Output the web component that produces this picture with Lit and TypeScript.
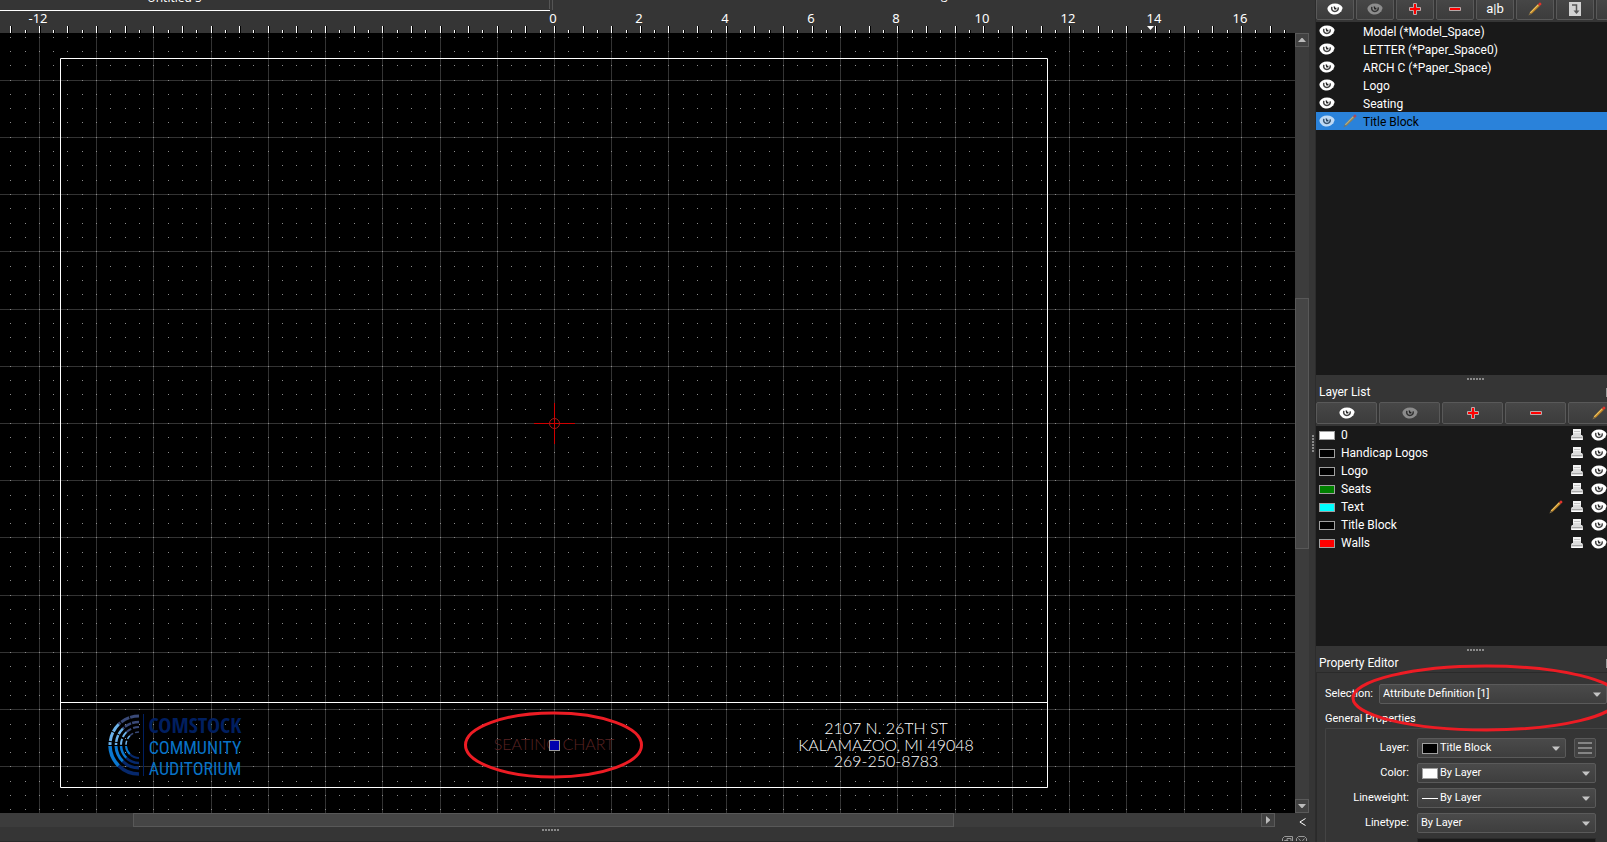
import { LitElement, html, svg, css } from "lit";
import { customElement } from "lit/decorators.js";
import { classMap } from "lit/directives/class-map.js";

const ORIGIN_X = 554;
const ORIGIN_Y = 423;
const STEP = 14.31;

const gridX = (k: number) => Math.round(ORIGIN_X + k * STEP);
const gridY = (k: number) => Math.round(ORIGIN_Y + k * STEP);
const range = (from: number, to: number) =>
  Array.from({ length: to - from + 1 }, (_, i) => from + i);

const eye = () => html`<svg class="icon" width="16" height="12" viewBox="0 0 16 12" aria-hidden="true">
  <path fill="currentColor" d="M.4 5C1.400 2.300 4.200.4 8 .4c3.900 0 6.500 1.700 7.600 4.400-.1 1.200-.5 1.900-1 2.500.2 1-.4 1.500-1.200 1.800C12.200 10.700 10.300 11.600 8 11.600c-2.600 0-4.700-1-5.900-2.700C1 8.200.4 6.500.4 5z"/>
  <path fill="none" stroke="#222" stroke-opacity=".85" stroke-width="1.500" d="M4.800 3.800c-.6 2.600.6 4.600 3.100 4.600 2.300 0 3.700-1.700 3.300-4"/>
  <path fill="#222" d="M6.500 3.600h1.600v1.200h1.300v1.600H7.400z"/>
</svg>`;

const plus = () => html`<svg class="icon" width="12" height="12" viewBox="0 0 12 12" aria-hidden="true">
  <path fill="#f00" stroke="#b9a9a9" d="M4.500.5h3v4h4v3h-4v4h-3v-4h-4v-3h4z"/>
</svg>`;

const minus = () => html`<svg class="icon" width="12" height="12" viewBox="0 0 12 12" aria-hidden="true">
  <path fill="#f00" stroke="#b9a9a9" d="M.5 4.500h11v3H.5z"/>
</svg>`;

const pencil = () => html`<svg class="icon" width="14" height="14" viewBox="0 0 14 14" aria-hidden="true">
  <path fill="#b97f24" d="M1.800 10.600 10 2.200l1.800 1.700-8.300 8.100z"/>
  <path fill="#f0c560" d="m1.800 10.600 8.200-8.400.8.800-8.200 8.300z"/>
  <path fill="#e0342c" d="M10 2.200 11.400.7c1-.5 2.300.7 1.900 1.700l-1.500 1.500z"/>
  <path fill="#8a7448" d="m1.800 10.600 1.700 1.400L.4 13.600z"/>
</svg>`;

const printer = () => html`<svg class="icon" width="12" height="12" viewBox="0 0 12 12" aria-hidden="true">
  <path fill="#f4f4f4" d="M2 0h8v6H2z"/>
  <path fill="#c4c4c4" d="M3 2h6v1H3zM2 4.500h8v1H2z"/>
  <path fill="#dcdcdc" d="M1 6h10l1 1.500V11H0V7.500z"/>
  <path fill="#a8a8a8" d="M.5 8h11v1H.5z"/>
  <path fill="#fff" d="M1 10h10v1H1z"/>
</svg>`;

const caret = () => html`<svg class="caret" width="8" height="5" viewBox="0 0 8 5" aria-hidden="true">
  <path fill="#c4c4c4" d="M0 .5h8L4.500 4.500h-1z"/>
</svg>`;

const editBlock = () => html`<svg class="icon" width="12" height="14" viewBox="0 0 12 14" aria-hidden="true">
  <path fill="#d2d2d2" d="M0 0h12v14H0z"/>
  <path fill="none" stroke="#555" stroke-width="1.500" d="M3 3h4.500v7"/>
  <path fill="#555" d="M4.500 8.500h6L7.500 12z"/>
</svg>`;

const gripDots = (w: number, h: number) => html`<svg class="dots" width=${w} height=${h} aria-hidden="true">
  ${range(0, 5).map((i) => svg`<rect fill="#8a8a8a" width="2" height="2"
    x=${w > h ? i * 3 : 0} y=${w > h ? 0 : i * 3}></rect>`)}
</svg>`;

const base = css`
  * { box-sizing: border-box; }
  svg { display: block; flex: none; }
  button, select, input { font: inherit; color: inherit; margin: 0; padding: 0; }
`;

const panelStyles = css`
  :host { display: block; color: #fff; font: 12px/18px "Roboto", "Noto Sans", sans-serif; }
  .title { margin: 0; padding: 0 3px; font-size: 12px; font-weight: 400; line-height: 18px; color: #fff; }
  .tools { display: flex; gap: 2px; overflow: hidden; }
  .tool {
    display: flex; flex: none; align-items: center; justify-content: center;
    height: 22px; color: #fff; border: 1px solid #595959; border-radius: 2px;
    background: linear-gradient(#474747, #3c3c3c);
  }
  .tool.off { color: #8c8c8c; }
  .list { margin: 0; padding: 0; list-style: none; background: #191919; overflow: hidden; }
  .row { display: flex; align-items: center; height: 18px; }
`;

@customElement("cad-drawing")
class CadDrawing extends LitElement {
  static styles = [base, css`
    :host { display: flex; flex-direction: column; min-width: 0; min-height: 0; }
    .ruler { width: 100%; height: 33px; background: #353535; }
    .sheet { flex: 1; width: 100%; min-height: 0; background: #000; }
    .num { fill: #fff; font: 13px "Noto Sans", sans-serif; text-anchor: middle; }
    .tab { fill: #fff; font: 12px "Open Sans", sans-serif; }
    .note { font: 300 16px "Lato", "Roboto", sans-serif; text-anchor: middle; }
    .address { fill: #fff; }
    .attribute { fill: #5a2222; }
    .brand { text-anchor: middle; }
    .brand-name { font: 700 22px "Open Sans Condensed", "Roboto Condensed", "Liberation Sans Narrow", sans-serif; fill: #001f60; }
    .brand-line { font: 18px "Liberation Sans Narrow", "Roboto Condensed", "Open Sans Condensed", sans-serif; fill: #0872c6; }
  `];

  private arc(r: number, w: number, dash: string) {
    const midX = 139 - r * 0.7;
    const top = 745 - r * 0.714;
    const bottom = 745 + r * 0.714;
    return svg`
      <g fill="none" stroke-width=${w}>
        <path stroke="#3a4a78" stroke-dasharray=${dash} d="M139 ${745 - r}A${r} ${r} 0 0 0 ${midX} ${top}"></path>
        <path stroke="#6cb2ea" stroke-dasharray=${dash} d="M${midX} ${top}A${r} ${r} 0 0 0 ${139 - r} 745"></path>
        <path stroke="#0a78d0" stroke-width=${w + 0.5} d="M${139 - r} 746A${r} ${r} 0 0 0 ${midX} ${bottom}"></path>
        <path stroke="#06286c" stroke-width=${w + 0.5} d="M${midX} ${bottom}A${r} ${r} 0 0 0 139 ${745 + r}"></path>
      </g>`;
  }

  render() {
    return html`
      <svg class="ruler" role="img" aria-label="Horizontal ruler">
        <text class="tab" x="147" y="2">Untitled 5</text>
        <text class="tab" x="941" y="-1">g</text>
        <path fill="#fff" d="M0 10h550v1H0z"/>
        <path fill="#555" d="M549 0h1v9h-1zM552 0h1v10h-1z"/>
        ${range(-38, 90).map((k) => {
          const long = k % 2 === 0;
          return svg`
            <rect fill="#000" x=${gridX(k) + 1} y=${long ? 26 : 30} width="1" height=${long ? 7 : 3}></rect>
            <rect fill="#fff" x=${gridX(k)} y=${long ? 26 : 30} width="1" height=${long ? 7 : 3}></rect>`;
        })}
        ${range(-6, 14).filter((n) => n === -6 || n >= 0).map((n) =>
          svg`<text class="num" x=${gridX(n * 6) - 1} y="23">${n * 2}</text>`)}
        <path fill="#fff" d="M1147 26h7l-3.500 4z"/>
      </svg>
      <svg class="sheet" role="img" aria-label="Title block drawing">
        <svg y="-33" overflow="visible">
          ${range(-9, 22).map((k) => svg`<rect fill="#333" x=${gridX(k * 4)} y="0" width="1" height="120%"></rect>`)}
          ${range(-6, 8).map((k) => svg`<rect fill="#333" x="0" y=${gridY(k * 4)} width="100%" height="1"></rect>`)}
          ${range(-28, 30).map((j) => svg`<path stroke="#8c8c8c" fill="none"
            d=${range(-38, 80).map((k) => `M${gridX(k)} ${gridY(j)}.5h1`).join("")}></path>`)}

          <g>
            ${this.arc(29, 3, "9 1")}
            ${this.arc(23, 2.5, "7 1")}
            ${this.arc(18, 2, "6 2")}
            ${this.arc(13, 1.5, "4 2")}
            <path fill="#001f60" d="M143 714h1v62h-1z"/>
            <text class="brand brand-name" x="195" y="733">COMSTOCK</text>
            <text class="brand brand-line" x="195" y="754">COMMUNITY</text>
            <text class="brand brand-line" x="195" y="775">AUDITORIUM</text>
          </g>

          <path fill="none" stroke="#fff" d="M60.500 58.500h987v729h-987zM60.500 702.500h987"/>

          <g class="address">
            <text class="note" x="886" y="734">2107 N. 26TH ST</text>
            <text class="note" x="886" y="751">KALAMAZOO, MI 49048</text>
            <text class="note" x="886" y="767">269-250-8783</text>
          </g>
          <text class="note attribute" x="554" y="750">SEATING CHART</text>
          <rect x="549.500" y="740.500" width="10" height="10" fill="#0000ae" stroke="#9c9c9c"/>

          <path fill="none" stroke="#d00000" d="M554.500 403v41M534 423.500h41"/>
          <circle cx="554.500" cy="423.500" r="5" fill="none" stroke="#a81818"/>
          <ellipse cx="553.500" cy="745" rx="88" ry="32" fill="none" stroke="#ed1c24" stroke-width="3"/>
        </svg>
      </svg>`;
  }
}

@customElement("block-list")
class BlockList extends LitElement {
  static styles = [base, panelStyles, css`
    :host { display: flex; flex-direction: column; gap: 2px; }
    .tools { margin-top: -2px; }
    .tool { width: 38px; font-size: 13px; }
    .list { flex: 1; }
    .row { padding-left: 3px; }
    .mark { display: flex; width: 28px; padding-left: 8px; }
    .name { padding-top: 1px; }
    .row.current { background: #2a82da; color: #000; }
    .row.current .icon { opacity: .7; }
    .row .icon { color: #fff; }
  `];

  private blocks = ["Model (*Model_Space)", "LETTER (*Paper_Space0)", "ARCH C (*Paper_Space)", "Logo", "Seating", "Title Block"];

  render() {
    return html`
      <div class="tools">
        <button class="tool" aria-label="Show all blocks">${eye()}</button>
        <button class="tool off" aria-label="Hide all blocks">${eye()}</button>
        <button class="tool" aria-label="Add block">${plus()}</button>
        <button class="tool" aria-label="Remove block">${minus()}</button>
        <button class="tool" aria-label="Rename block">a|b</button>
        <button class="tool" aria-label="Edit block">${pencil()}</button>
        <button class="tool" aria-label="Insert block">${editBlock()}</button>
        <button class="tool" aria-label="More"></button>
      </div>
      <ul class="list">
        ${this.blocks.map((name, i) => {
          const current = i === this.blocks.length - 1;
          return html`<li class=${classMap({ row: true, current })}>
            ${eye()}<span class="mark">${current ? pencil() : ""}</span><span class="name">${name}</span>
          </li>`;
        })}
      </ul>`;
  }
}

@customElement("layer-list")
class LayerList extends LitElement {
  static styles = [base, panelStyles, css`
    :host { display: flex; flex-direction: column; gap: 1px; }
    .tool { width: 61px; }
    .list { flex: 1; margin-top: 1px; }
    .row { gap: 8px; padding-left: 3px; }
    .name { flex: 1; }
    .swatch { flex: none; width: 16px; height: 9px; margin-right: -2px; border: 1px solid #a0a0a0; }
    .white { background: #fff; }
    .black { background: #000; }
    .green { background: #008000; }
    .cyan { background: #0ff; }
    .red { background: #f00; }
    .head { display: flex; justify-content: space-between; align-items: center; }
    .float { width: 1px; height: 9px; background: #999; }
  `];

  private layers = [
    ["0", "white"], ["Handicap Logos", "black"], ["Logo", "black"], ["Seats", "green"],
    ["Text", "cyan"], ["Title Block", "black"], ["Walls", "red"],
  ];

  render() {
    return html`
      <div class="head"><h2 class="title">Layer List</h2><span class="float"></span></div>
      <div class="tools">
        <button class="tool" aria-label="Show all layers">${eye()}</button>
        <button class="tool off" aria-label="Hide all layers">${eye()}</button>
        <button class="tool" aria-label="Add layer">${plus()}</button>
        <button class="tool" aria-label="Remove layer">${minus()}</button>
        <button class="tool" aria-label="Edit layer">${pencil()}</button>
      </div>
      <ul class="list">
        ${this.layers.map(([name, color]) => html`<li class="row">
          <span class="swatch ${color}"></span><span class="name">${name}</span>
          ${name === "Text" ? pencil() : ""}${printer()}${eye()}
        </li>`)}
      </ul>`;
  }
}

@customElement("property-editor")
class PropertyEditor extends LitElement {
  static styles = [base, panelStyles, css`
    :host { position: relative; overflow: hidden; font-size: 11px; }
    .head { display: flex; justify-content: space-between; align-items: center; }
    .float { width: 1px; height: 9px; background: #999; }
    .body { padding: 11px 0 0 8px; border: solid #2a2a2a; border-width: 1px 0 0 1px; }
    .pick { display: flex; align-items: center; gap: 7px; }
    .pick label { width: 47px; }
    .pick .combo { flex: 1; }
    .section { margin: 6px 0 0; font-size: 11px; font-weight: 400; line-height: 18px; }
    .group {
      display: grid; grid-template-columns: 83px 1fr; gap: 5px 8px; align-items: center;
      padding: 9px 11px 0 0; border: solid #444; border-width: 1px 0 0 1px; border-radius: 2px 0 0 0;
    }
    .group label { text-align: right; white-space: nowrap; }
    .pair { display: flex; gap: 8px; }
    .pair .combo { flex: 1; }
    .combo {
      display: flex; align-items: center; height: 20px; min-width: 0; gap: 2px; padding: 0 5px 0 3px;
      border: 1px solid #5a5a5a; border-radius: 2px; background: linear-gradient(#4a4a4a, #3e3e3e);
    }
    .combo select { flex: 1; min-width: 0; height: 18px; appearance: none; border: 0; background: transparent; }
    .chip { flex: none; width: 16px; height: 11px; margin-left: 1px; border: 1px solid #a0a0a0; background: #000; }
    .chip.white { background: #fff; }
    .chip.line { height: 1px; border: 0; background: #fff; }
    .menu { display: flex; align-items: center; justify-content: center; width: 22px; height: 20px; border: 1px solid #5a5a5a; border-radius: 2px; background: #424242; }
    .field { grid-column: 2; width: 100%; height: 20px; border: 1px solid #2a2a2a; background: #191919; }
    .ring { position: absolute; left: 0; top: 0; width: 100%; height: 100%; pointer-events: none; }
  `];

  render() {
    return html`
      <div class="head"><h2 class="title">Property Editor</h2><span class="float"></span></div>
      <div class="body">
        <div class="pick">
          <label for="selection">Selection:</label>
          <div class="combo"><select id="selection"><option>Attribute Definition [1]</option></select>${caret()}</div>
        </div>
        <h3 class="section">General Properties</h3>
        <div class="group">
          <label for="layer">Layer:</label>
          <div class="pair">
            <div class="combo"><span class="chip"></span><select id="layer"><option>Title Block</option></select>${caret()}</div>
            <button class="menu" aria-label="Layer options">
              <svg width="14" height="12" viewBox="0 0 14 12"><path fill="#858585" d="M0 0h14v2H0zM0 5h14v2H0zM0 10h14v2H0z"/></svg>
            </button>
          </div>
          <label for="color">Color:</label>
          <div class="combo"><span class="chip white"></span><select id="color"><option>By Layer</option></select>${caret()}</div>
          <label for="weight">Lineweight:</label>
          <div class="combo"><span class="chip line"></span><select id="weight"><option>By Layer</option></select>${caret()}</div>
          <label for="linetype">Linetype:</label>
          <div class="combo"><select id="linetype"><option>By Layer</option></select>${caret()}</div>
          <input class="field" aria-label="Linetype scale" />
        </div>
      </div>
      <svg class="ring" aria-hidden="true">
        <ellipse cx="170" cy="44" rx="133" ry="32" fill="none" stroke="#ed1c24" stroke-width="3"/>
      </svg>`;
  }
}

@customElement("app-root")
class AppRoot extends LitElement {
  static styles = [base, css`
    :host {
      display: flex; height: 100vh; overflow: hidden; background: #353535;
      color: #fff; font: 12px/18px "Roboto", "Noto Sans", sans-serif;
    }
    .work { display: flex; flex: 1; flex-direction: column; min-width: 0; }
    .view { display: flex; flex: 1; min-height: 0; }
    cad-drawing { flex: 1; }
    .vbar { display: flex; flex-direction: column; width: 14px; padding-top: 33px; }
    .track { display: flex; flex: 1; background: #3c3c3c; }
    .vbar .track { flex-direction: column; }
    .before-v { flex: 252; }
    .thumb-v { flex: 251; }
    .after-v { flex: 251; }
    .before-h { flex: 133; }
    .thumb-h { flex: 821; }
    .after-h { flex: 308; }
    .thumb { border: 1px solid #585858; background: #454545; }
    .arrow { display: flex; flex: none; align-items: center; justify-content: center; width: 14px; height: 14px; padding: 0; border: 1px solid #5a5a5a; background: #424242; }
    .lower { display: flex; }
    .hbar { display: flex; flex: 1; height: 14px; }
    .corner { display: flex; align-items: center; justify-content: center; width: 14px; height: 18px; margin: 0 0 -4px 20px; padding: 0; border: 0; background: none; }
    .foot { display: flex; height: 15px; border-bottom: 1px solid #2a2a2a; overflow: hidden; }
    .foot-grip { display: flex; flex: 1103 0 0; justify-content: center; padding-top: 2px; }
    .foot-icons { display: flex; flex: 206 0 0; justify-content: flex-end; gap: 3px; padding: 9px 2px 0 0; }
    .split { display: flex; align-items: center; width: 7px; padding: 44px 0 0 3px; border-right: 1px solid #2c2c2c; }
    .docks { display: flex; flex-direction: column; width: 291px; }
    block-list { flex: 375 0 0; min-height: 0; }
    layer-list { flex: 263 0 0; min-height: 0; }
    property-editor { flex: none; height: 188px; }
    .sash { display: flex; flex: none; justify-content: center; height: 8px; padding: 3px 0 0 28px; }
  `];

  render() {
    return html`
      <main class="work">
        <div class="view">
          <cad-drawing></cad-drawing>
          <div class="vbar">
            <button class="arrow" aria-label="Scroll up"><svg width="8" height="4" viewBox="0 0 8 4"><path fill="#bbb" d="M0 4h8L4.500 0h-1z"/></svg></button>
            <div class="track"><div class="before-v"></div><div class="thumb thumb-v"></div><div class="after-v"></div></div>
            <button class="arrow" aria-label="Scroll down"><svg width="8" height="4" viewBox="0 0 8 4"><path fill="#bbb" d="M0 0h8L4.500 4h-1z"/></svg></button>
          </div>
        </div>
        <div class="lower">
          <div class="hbar">
            <div class="track"><div class="before-h"></div><div class="thumb thumb-h"></div><div class="after-h"></div></div>
            <button class="arrow" aria-label="Scroll right"><svg width="4" height="8" viewBox="0 0 4 8"><path fill="#bbb" d="M0 0v8l4-3.500v-1z"/></svg></button>
          </div>
          <button class="corner" aria-label="Collapse"><svg width="7" height="8" viewBox="0 0 7 8"><path fill="none" stroke="#fff" d="M6.500.5.900 4l5.600 3.500"/></svg></button>
        </div>
        <div class="foot">
          <div class="foot-grip">${gripDots(17, 2)}</div>
          <div class="foot-icons">
            <svg width="11" height="8" viewBox="0 0 11 8"><path fill="none" stroke="#999" d="M.5 8V2.500l2-2h8V8M2.500 8V4.500H6V8M5 4V2.500h4V8"/></svg>
            <svg width="11" height="8" viewBox="0 0 11 8"><path fill="none" stroke="#999" d="M.5 8V2.500l2-2h6l2 2V8M2.500 2.500 5.500 6l3-3.500"/></svg>
          </div>
        </div>
      </main>
      <div class="split">${gripDots(2, 17)}</div>
      <aside class="docks">
        <block-list></block-list>
        <div class="sash">${gripDots(17, 2)}</div>
        <layer-list></layer-list>
        <div class="sash">${gripDots(17, 2)}</div>
        <property-editor></property-editor>
      </aside>`;
  }
}
